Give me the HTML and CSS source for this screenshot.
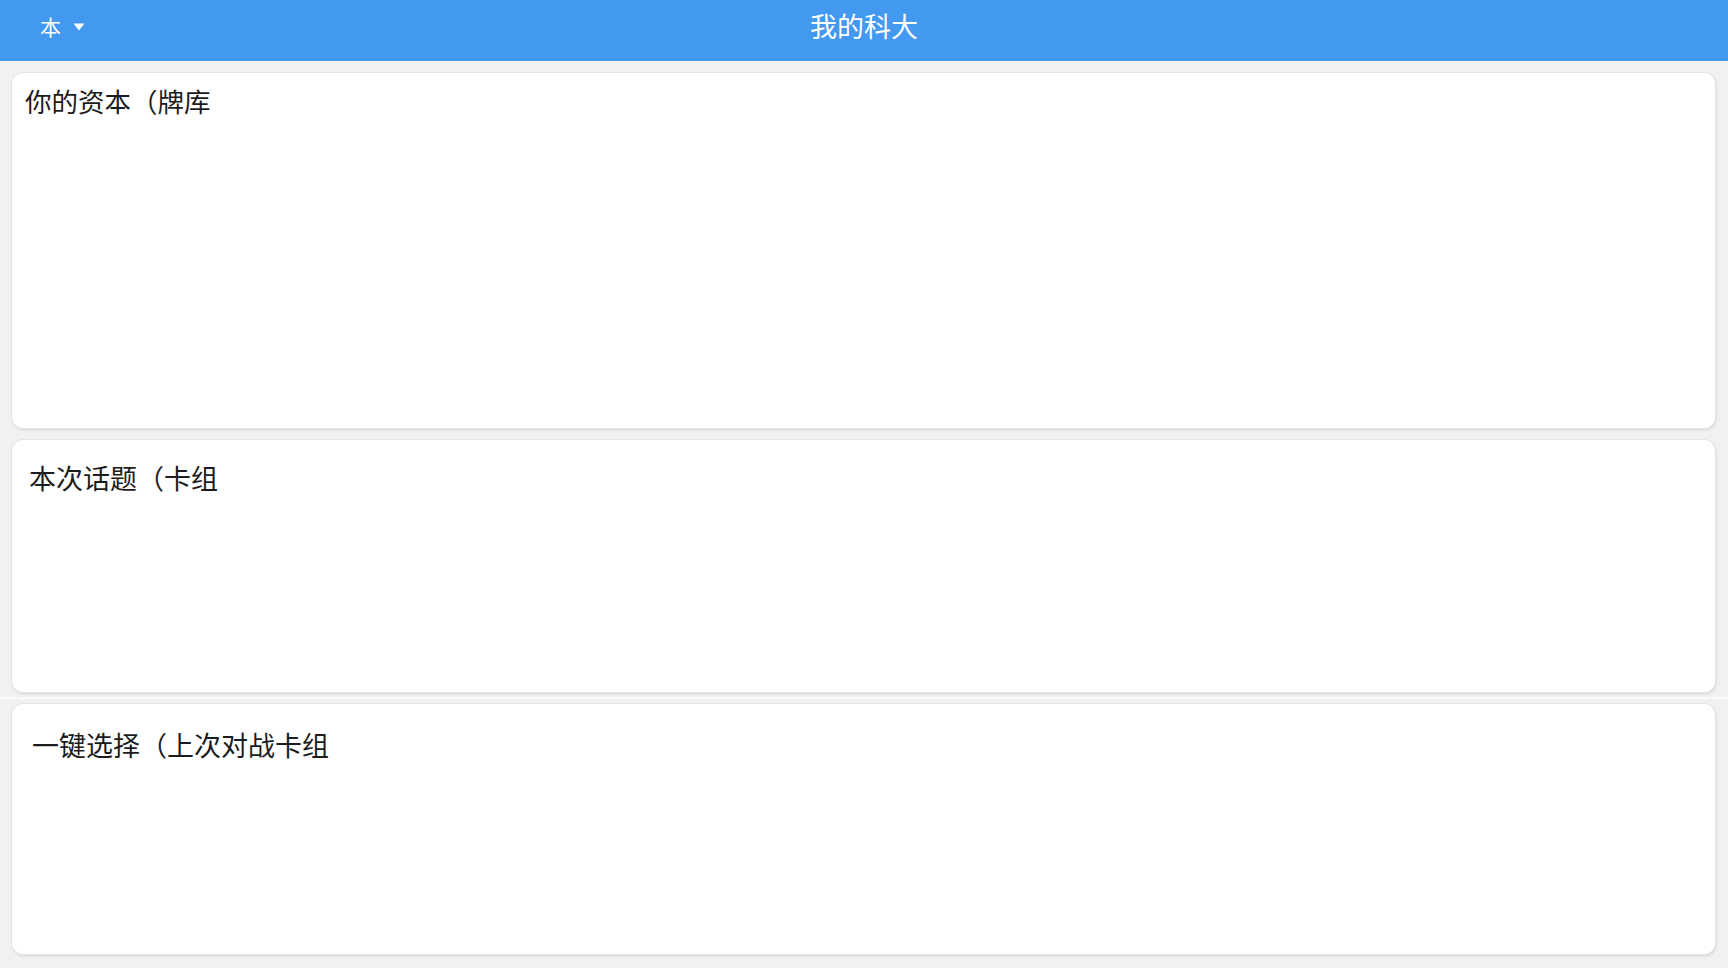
FILE: index.html
```html
<!DOCTYPE html>
<html lang="zh">
<head>
<meta charset="utf-8">
<title>我的科大</title>
<link rel="stylesheet" href="styles.css">
</head>
<body>
<header class="appbar">
  <div class="picker">
    <span class="picker-label">本</span>
    <svg class="picker-caret" width="12" height="8" viewBox="0 0 12 8"><path d="M0.5 0.5 L11.5 0.5 L6 7.5 Z" fill="#ffffff"/></svg>
  </div>
  <h1 class="title">我的科大</h1>
</header>
<main class="content">
  <section class="card card-deck"><h2 class="card-title t1">你的资本（牌库</h2></section>
  <section class="card card-topic"><h2 class="card-title t2">本次话题（卡组</h2></section>
  <div class="divider"></div>
  <section class="card card-quick"><h2 class="card-title t3">一键选择（上次对战卡组</h2></section>
</main>
</body>
</html>
```
FILE: styles.css
```css
* { box-sizing: border-box; }
html, body { margin: 0; padding: 0; }
body {
  width: 1728px;
  height: 968px;
  overflow: hidden;
  background: #f1f1f1;
  font-family: "Noto Sans CJK SC", "Noto Sans", sans-serif;
  color: #1c1c1c;
}
.appbar {
  position: relative;
  height: 61px;
  background: #4399ef;
  display: flex;
  align-items: center;
  justify-content: center;
}
.picker {
  position: absolute;
  left: 40px;
  top: 11px;
  display: flex;
  align-items: center;
  gap: 12px;
  color: #fff;
}
.picker-label { font-size: 21px; line-height: 30px; }
.picker-caret { display: block; margin-top: 1px; }
.title {
  margin: 0;
  font-size: 27px;
  font-weight: 400;
  color: #fff;
  line-height: 32px;
  margin-top: -9px;
}
.content {
  display: flex;
  flex-direction: column;
  padding: 12px 13px 0 12px;
}
.card {
  background: #fff;
  border-radius: 11px;
  box-shadow: 0 0 0 1px #e4e4e4, 1px 2px 3px rgba(0,0,0,0.12);
}
.card-deck { height: 355px; }
.card-topic { height: 252px; margin-top: 12px; }
.divider {
  height: 2px;
  background: #fbfbfb;
  margin: 5px -13px 5px -12px;
}
.card-quick { height: 250px; }
.card-title {
  margin: 0;
  font-weight: 400;
}
.t1 { font-size: 26.5px; line-height: 32px; padding: 12px 0 0 13px; }
.t2 { font-size: 27px; line-height: 32px; padding: 22px 0 0 17px; }
.t3 { font-size: 27px; line-height: 34px; padding: 24px 0 0 20px; }
```
